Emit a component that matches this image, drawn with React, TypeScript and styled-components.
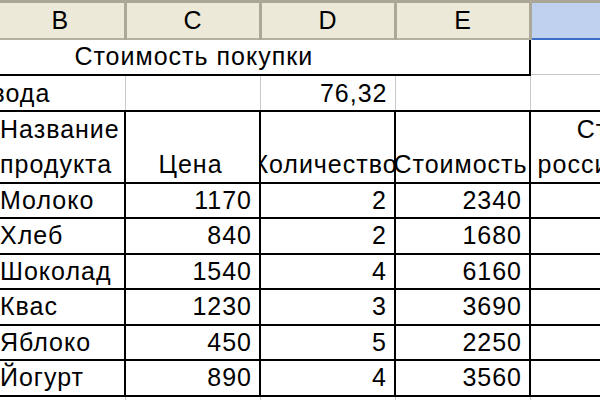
import React from "react";
import styled, { createGlobalStyle, css } from "styled-components";

const Global = createGlobalStyle`
  html, body { margin: 0; padding: 0; background: #fff; overflow: hidden; }
  body { font-family: "Liberation Sans", Arial, sans-serif; }
`;

const Viewport = styled.div`
  width: 600px;
  height: 400px;
  overflow: hidden;
  background: #fff;
`;

const Sheet = styled.table`
  margin-left: -5px;
  border-collapse: collapse;
  table-layout: fixed;
  width: 788px;
  font-family: "Liberation Sans", Arial, sans-serif;
  font-size: 25px;
  letter-spacing: 1px;
  color: #000;
`;

const Row = styled.tr<{ $h: number }>`
  height: ${(p) => p.$h}px;
`;

const ColHead = styled.th<{ $selected?: boolean }>`
  height: 32px;
  padding: 0;
  font-weight: normal;
  font-size: 25px;
  letter-spacing: 0;
  text-align: center;
  vertical-align: middle;
  background: ${(p) => (p.$selected ? "#bfd1ee" : "#ece9d8")};
  border-top: 3px solid #a9a696;
  border-right: 3px solid #aca899;
  border-bottom: 2px solid ${(p) => (p.$selected ? "#3b6ec8" : "#b3b09f")};
  color: #000;
`;

type Align = "left" | "right" | "center";

const Cell = styled.td<{ $valign?: "middle" | "bottom"; $boxed?: boolean }>`
  padding: 0;
  border: 1px solid #c9c9c9;
  vertical-align: ${(p) => p.$valign ?? "middle"};
  ${(p) =>
    p.$boxed &&
    css`
      border: 2px solid #000;
    `}
`;

const TitleCell = styled(Cell)<{ $last?: boolean; $joined?: boolean }>`
  border-bottom: 2px solid #000;
  ${(p) =>
    p.$last &&
    css`
      border-right: 2px solid #000;
    `}
  ${(p) =>
    p.$joined &&
    css`
      border-left-style: hidden;
    `}
`;

const CellText = styled.div<{ $align?: Align; $shift?: number }>`
  display: flex;
  justify-content: ${(p) =>
    p.$align === "right" ? "flex-end" : p.$align === "center" ? "center" : "flex-start"};
  padding: 0 7px 0 3px;
  overflow: hidden;
  white-space: nowrap;
  line-height: 33px;
  ${(p) =>
    p.$shift !== undefined &&
    css`
      margin-left: ${p.$shift}px;
    `}
`;

const Lines = styled.div<{ $align?: Align }>`
  display: flex;
  flex-direction: column;
  align-items: ${(p) =>
    p.$align === "center" ? "center" : p.$align === "right" ? "flex-end" : "flex-start"};
  padding: 0 7px 0 3px;
  overflow: hidden;
  white-space: nowrap;
  line-height: 35px;
`;

const products = [
  { name: "Молоко", price: 1170, qty: 2, cost: 2340 },
  { name: "Хлеб", price: 840, qty: 2, cost: 1680 },
  { name: "Шоколад", price: 1540, qty: 4, cost: 6160 },
  { name: "Квас", price: 1230, qty: 3, cost: 3690 },
  { name: "Яблоко", price: 450, qty: 5, cost: 2250 },
  { name: "Йогурт", price: 890, qty: 4, cost: 3560 },
];

export default function App() {
  return (
    <Viewport>
      <Global />
      <Sheet>
        <colgroup>
          <col style={{ width: 129 }} />
          <col style={{ width: 135 }} />
          <col style={{ width: 135 }} />
          <col style={{ width: 135 }} />
          <col style={{ width: 254 }} />
        </colgroup>
        <thead>
          <Row $h={37}>
            <ColHead>B</ColHead>
            <ColHead>C</ColHead>
            <ColHead>D</ColHead>
            <ColHead>E</ColHead>
            <ColHead $selected />
          </Row>
        </thead>
        <tbody>
          <Row $h={36}>
            <TitleCell colSpan={3}>
              <CellText $align="center">Стоимость покупки</CellText>
            </TitleCell>
            <TitleCell $last $joined />
            <Cell />
          </Row>
          <Row $h={36}>
            <Cell $valign="bottom">
              <CellText $shift={-8}>вода</CellText>
            </Cell>
            <Cell />
            <Cell $valign="bottom">
              <CellText $align="right">76,32</CellText>
            </Cell>
            <Cell />
            <Cell />
          </Row>
          <Row $h={71}>
            <Cell $boxed $valign="bottom">
              <Lines>
                <span>Название</span>
                <span>продукта</span>
              </Lines>
            </Cell>
            <Cell $boxed $valign="bottom">
              <Lines $align="center">
                <span>Цена</span>
              </Lines>
            </Cell>
            <Cell $boxed $valign="bottom">
              <Lines $align="center">
                <span>Количество</span>
              </Lines>
            </Cell>
            <Cell $boxed $valign="bottom">
              <Lines $align="center">
                <span>Стоимость</span>
              </Lines>
            </Cell>
            <Cell $boxed $valign="bottom">
              <Lines $align="center">
                <span>Стоимость в</span>
                <span>российских рублях</span>
              </Lines>
            </Cell>
          </Row>
          {products.map((p) => (
            <Row $h={35.5} key={p.name}>
              <Cell $boxed>
                <CellText>{p.name}</CellText>
              </Cell>
              <Cell $boxed>
                <CellText $align="right">{p.price}</CellText>
              </Cell>
              <Cell $boxed>
                <CellText $align="right">{p.qty}</CellText>
              </Cell>
              <Cell $boxed>
                <CellText $align="right">{p.cost}</CellText>
              </Cell>
              <Cell $boxed />
            </Row>
          ))}
          <Row $h={36}>
            <Cell />
            <Cell />
            <Cell />
            <Cell />
            <Cell />
          </Row>
        </tbody>
      </Sheet>
    </Viewport>
  );
}
